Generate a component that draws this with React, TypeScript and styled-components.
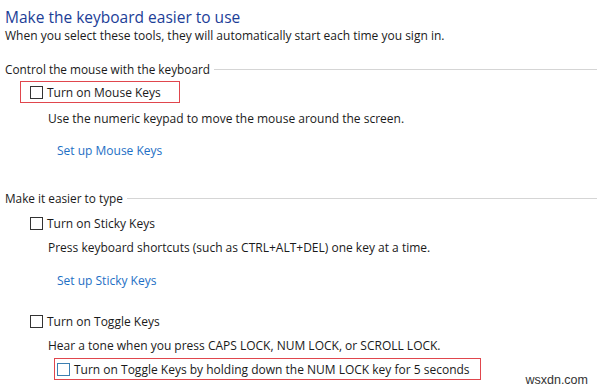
import React from "react";
import styled, { createGlobalStyle } from "styled-components";

const Global = createGlobalStyle`
  html, body { margin: 0; padding: 0; background: #ffffff; }
  body { font-family: "Open Sans", "Noto Sans", sans-serif; color: #1a1a1a; }
`;

const Page = styled.div`
  position: relative;
  width: 600px;
  height: 389px;
  box-sizing: border-box;
  padding: 7px 3px 0 5px;
  display: flex;
  flex-direction: column;
  overflow: hidden;
`;

const Title = styled.h1`
  margin: 0;
  font-size: 15.5px;
  font-weight: 400;
  line-height: 21px;
  color: #1c3e97;
`;

const Text = styled.div<{ $mt?: number; $indent?: number }>`
  margin-top: ${(p) => p.$mt ?? 0}px;
  margin-left: ${(p) => p.$indent ?? 0}px;
  font-size: 12px;
  line-height: 20px;
  white-space: nowrap;
`;

const Subtitle = styled(Text)`
  line-height: 14px;
`;

const Link = styled.a<{ $mt?: number }>`
  display: block;
  margin-top: ${(p) => p.$mt ?? 0}px;
  margin-left: 52px;
  font-size: 12px;
  line-height: 20px;
  color: #1e6fc5;
  text-decoration: none;
  white-space: nowrap;
`;

const SectionHeader = styled.div<{ $mt: number }>`
  margin-top: ${(p) => p.$mt}px;
  display: flex;
  align-items: center;
  gap: 4px;
  font-size: 11.8px;
  line-height: 20px;
  white-space: nowrap;
  &::after {
    content: "";
    flex: 1;
    height: 1px;
    background: #d5d5d5;
  }
`;

const OptionRow = styled.label<{ $mt: number; $indent: number; $highlight?: boolean; $padL: number; $padR: number }>`
  align-self: flex-start;
  margin-top: ${(p) => p.$mt}px;
  margin-left: ${(p) => p.$indent}px;
  box-sizing: border-box;
  height: 22px;
  display: inline-flex;
  align-items: center;
  gap: 4px;
  padding: 0 ${(p) => p.$padR}px 0 ${(p) => p.$padL}px;
  border: 1px solid ${(p) => (p.$highlight ? "#e0464d" : "transparent")};
  font-size: 12px;
  white-space: nowrap;
`;

const Box = styled.span<{ $focus?: boolean }>`
  width: 13px;
  height: 13px;
  box-sizing: border-box;
  border: 1px solid ${(p) => (p.$focus ? "#3c7fb1" : "#333333")};
  background: #ffffff;
  flex: none;
  margin-top: 1px;
`;

const Watermark = styled.div`
  position: absolute;
  right: 12px;
  bottom: 2px;
  font-family: "Liberation Sans", Arial, sans-serif;
  font-size: 12.5px;
  color: #333333;
`;

export default function App() {
  return (
    <>
      <Global />
      <Page>
        <Title>Make the keyboard easier to use</Title>
        <Subtitle $mt={1}>When you select these tools, they will automatically start each time you sign in.</Subtitle>

        <SectionHeader $mt={16}>Control the mouse with the keyboard</SectionHeader>
        <OptionRow $mt={2} $indent={15} $padL={9} $padR={18} $highlight>
          <Box />
          Turn on Mouse Keys
        </OptionRow>
        <Text $mt={6} $indent={43}>Use the numeric keypad to move the mouse around the screen.</Text>
        <Link $mt={12} href="#">Set up Mouse Keys</Link>

        <SectionHeader $mt={27}>Make it easier to type</SectionHeader>
        <OptionRow $mt={4} $indent={15} $padL={9} $padR={18}>
          <Box />
          Turn on Sticky Keys
        </OptionRow>
        <Text $mt={4} $indent={43}>Press keyboard shortcuts (such as CTRL+ALT+DEL) one key at a time.</Text>
        <Link $mt={13} href="#">Set up Sticky Keys</Link>

        <OptionRow $mt={19} $indent={15} $padL={9} $padR={18}>
          <Box />
          Turn on Toggle Keys
        </OptionRow>
        <Text $mt={4} $indent={43}>Hear a tone when you press CAPS LOCK, NUM LOCK, or SCROLL LOCK.</Text>
        <OptionRow $mt={2} $indent={49} $padL={2} $padR={10} $highlight>
          <Box $focus />
          Turn on Toggle Keys by holding down the NUM LOCK key for 5 seconds
        </OptionRow>
        <Watermark>wsxdn.com</Watermark>
      </Page>
    </>
  );
}
